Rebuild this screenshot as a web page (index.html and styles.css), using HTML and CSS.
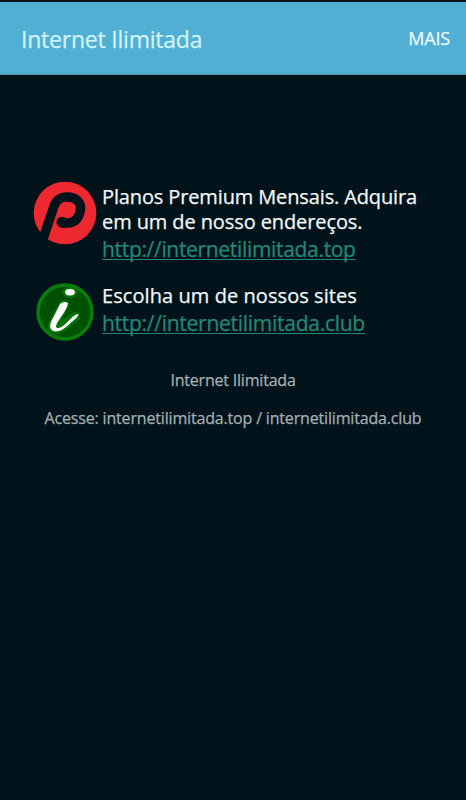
FILE: index.html
```html
<!DOCTYPE html>
<html lang="pt-BR">
<head>
  <meta charset="UTF-8">
  <meta name="viewport" content="width=device-width, initial-scale=1.0">
  <title>Internet Ilimitada</title>
  <link rel="stylesheet" href="styles.css">
</head>
<body>
  <header>
    <h1>Internet Ilimitada</h1>
    <div class="menu">MAIS</div>
  </header>

  <main>
    <div class="item">
      <svg class="icon" viewBox="0 0 64 64">
        <circle cx="32" cy="32" r="31.3" fill="#ee2830"/>
        <path d="M8 64 L20 28 C23 18 28 16 34 16 C43 16 48 21 47.500 28 C46.500 37 42 42 34 42 L29 42" fill="none" stroke="#00131a" stroke-width="9.500"/>
        <circle cx="29" cy="41.200" r="5.500" fill="#00131a"/>
      </svg>
      <div class="text">
        <p class="line1">Planos Premium Mensais. Adquira</p>
        <p class="line2">em um de nosso endereços.</p>
        <a class="link-top" href="http://internetilimitada.top">http://internetilimitada.top</a>
      </div>
    </div>

    <div class="item sites">
      <svg class="icon" viewBox="0 0 64 64">
        <circle cx="32" cy="32" r="27" fill="#005200" stroke="#087d0b" stroke-width="3.500"/>
        <path d="M31 25 L20 45 C19 51 26 49 31 45 L42 37" fill="none" stroke="#087308" stroke-width="10" stroke-linecap="round"/>
        <ellipse cx="37" cy="12.300" rx="7.500" ry="5.500" fill="#087308"/>
        <ellipse cx="37" cy="12.300" rx="4.800" ry="3.200" fill="#fff"/>
        <path d="M27 24 Q31 20.500 35 23 C34 31 24.500 40 23 46 C23 50 29 47.500 33 43.500 C38 38.500 41 34.500 45.500 34 C45 38 39 41 35 45.500 C30 50 24 53 19.500 50.500 C15 47.500 18 41 20.500 37 Z" fill="#fff"/>
      </svg>
      <div class="text">
        <p class="line3">Escolha um de nossos sites</p>
        <a class="link-club" href="http://internetilimitada.club">http://internetilimitada.club</a>
      </div>
    </div>

    <footer>
      <p class="name">Internet Ilimitada</p>
      <p class="access">Acesse: internetilimitada.top / internetilimitada.club</p>
    </footer>
  </main>
</body>
</html>
```
FILE: styles.css
```css
* {
  box-sizing: border-box;
}
body {
  background-color: #00131a;
  color: #f2f7f8;
  font-family: "Open Sans", "Noto Sans", sans-serif;
  -webkit-text-stroke: 0.25px;
  margin: 0;
  padding-top: 2px;
  height: 800px;
  overflow: hidden;
}
h1, p {
  margin: 0;
  font-weight: 400;
  white-space: nowrap;
}
header {
  background-color: #50afd2;
  border-bottom: 1px solid #5b8f9f;
  height: 73px;
  padding: 0 16px 0 21px;
  display: flex;
  align-items: center;
  justify-content: space-between;
}
header h1 {
  color: #d2f3fb;
  font-size: 23px;
  line-height: 34px;
  letter-spacing: -0.22px;
  padding-top: 1px;
}
.menu {
  color: #eefaff;
  font-size: 18px;
  line-height: 24px;
  letter-spacing: -0.15px;
}
main {
  padding-top: 106px;
}
.item {
  display: flex;
  align-items: flex-start;
  padding-left: 33px;
}
.icon {
  width: 64px;
  height: 64px;
  flex: none;
}
.text {
  padding: 3px 0 0 5px;
  font-size: 20px;
  line-height: 25px;
}
.text a {
  display: block;
  width: max-content;
  color: #238878;
  font-size: 21px;
  line-height: 30px;
  text-decoration-thickness: 1px;
  text-underline-offset: 2px;
  text-decoration-skip-ink: none;
}
.line1 {
  letter-spacing: -0.13px;
}
.line2 {
  letter-spacing: -0.1px;
}
.line3 {
  letter-spacing: 0.07px;
}
.link-top {
  letter-spacing: -0.32px;
}
.link-club {
  letter-spacing: -0.27px;
}
.sites {
  margin-top: 16px;
}
.sites .icon {
  margin-top: -0.5px;
}
footer {
  color: #a5afb3;
  font-size: 16px;
  line-height: 22px;
  text-align: center;
  padding-top: 25px;
}
.name {
  letter-spacing: -0.2px;
}
.access {
  margin-top: 16px;
  letter-spacing: -0.17px;
}
```
